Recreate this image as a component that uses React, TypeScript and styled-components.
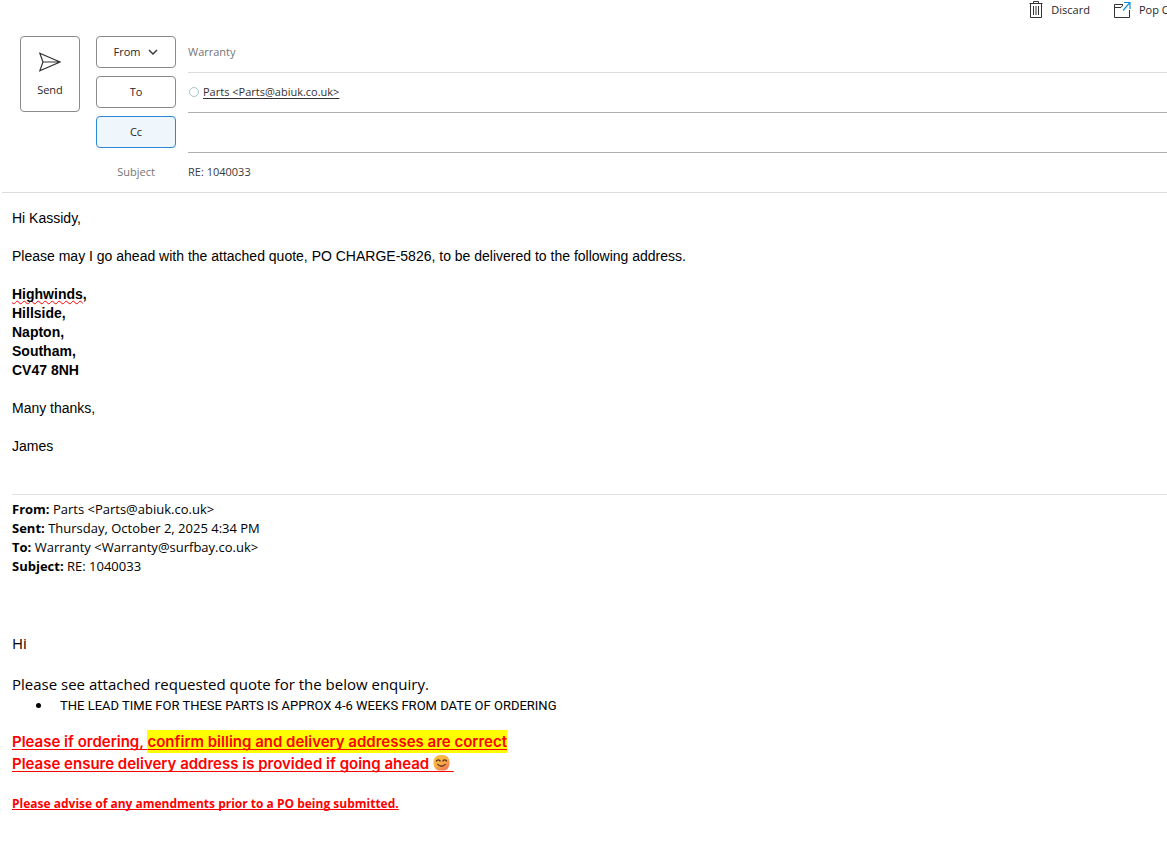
import React from "react";
import styled, { createGlobalStyle } from "styled-components";

const ui = `"Open Sans", "Segoe UI", sans-serif`;
const text = `"Liberation Sans", Arial, sans-serif`;
const humanist = `"Open Sans", Calibri, sans-serif`;

const GlobalStyle = createGlobalStyle`
  *, *::before, *::after { box-sizing: border-box; }
  body { margin: 0; background: #fff; color: #000; overflow-x: hidden; }
  p, ul { margin: 0; padding: 0; }
`;

const Page = styled.main`
  min-width: 0;
  overflow: hidden;
`;

const Toolbar = styled.div`
  display: flex;
  justify-content: flex-end;
  gap: 24px;
  height: 32px;
  margin-right: -14px;
`;

const ToolButton = styled.button`
  display: flex;
  align-items: center;
  gap: 8px;
  height: 20px;
  padding: 0;
  border: 0;
  background: none;
  color: #262626;
  font: 11px/20px ${ui};
  white-space: nowrap;
  svg { flex: none; }
`;

const Compose = styled.form`
  display: grid;
  grid-template-columns: 60px 1fr;
  gap: 16px;
  margin-left: 2px;
  padding-left: 18px;
  border-bottom: 1px solid #dcdcdc;
`;

const SendButton = styled.button`
  display: flex;
  flex-direction: column;
  align-items: center;
  justify-content: center;
  gap: 8px;
  height: 76px;
  margin-top: 4px;
  padding: 4px 0 0;
  border: 1px solid #8a8a8a;
  border-radius: 4px;
  background: #fff;
  color: #262626;
  font: 11px/20px ${ui};
`;

const Fields = styled.div`
  display: grid;
  grid-auto-rows: 40px;
  min-width: 0;
`;

const FieldRow = styled.div`
  display: grid;
  grid-template-columns: 80px 1fr;
  gap: 12px;
  align-items: center;
`;

const FieldButton = styled.button<{ $active?: boolean }>`
  display: flex;
  align-items: center;
  justify-content: center;
  gap: 8px;
  height: 32px;
  padding: 0;
  border: 1px solid ${(p) => (p.$active ? "#2b88d8" : "#8a8a8a")};
  border-radius: 4px;
  background: ${(p) => (p.$active ? "#eff6fc" : "#fff")};
  color: #262626;
  font: 11px/20px ${ui};
`;

const FieldLabel = styled.label`
  text-align: center;
  color: #757575;
  font: 11px/20px ${ui};
`;

const FieldValue = styled.div<{ $line?: string }>`
  display: flex;
  align-items: center;
  gap: 4px;
  height: 40px;
  min-width: 0;
  box-shadow: ${(p) => (p.$line ? `0 1px 0 ${p.$line}` : "none")};
`;

const FieldInput = styled.input<{ $muted?: boolean }>`
  flex: 1;
  min-width: 0;
  padding: 0;
  border: 0;
  outline: 0;
  background: transparent;
  color: ${(p) => (p.$muted ? "#757575" : "#3b3a39")};
  font: 11px/20px ${ui};
`;

const Presence = styled.span`
  width: 10px;
  height: 10px;
  margin-left: 1px;
  border: 1px solid #a9c4cd;
  border-radius: 50%;
`;

const Recipient = styled.a`
  color: #323130;
  font: 11px/20px ${ui};
  text-decoration: underline;
  text-underline-offset: 2px;
`;

const Message = styled.article`
  padding: 16px 0 32px 12px;
`;

const Paragraph = styled.p`
  margin-bottom: 19px;
  font: 14px/19px ${text};
`;

const Address = styled.p`
  margin-bottom: 19px;
  font: bold 14px/19px ${text};
`;

const Misspelled = styled.span`
  text-decoration: underline wavy #f00 1px;
  text-decoration-skip-ink: none;
  text-underline-offset: 1px;
`;

const QuoteHeader = styled.div`
  margin-top: 38px;
  padding-top: 5px;
  border-top: 1px solid #e1e1e1;
  font: 13px/19px ${humanist};
`;

const Quoted = styled.section`
  padding-top: 57px;
`;

const Large = styled.p`
  margin-bottom: 20px;
  font: 15px/21px ${humanist};
`;

const Notes = styled.ul`
  margin-top: -20px;
  padding-left: 24px;
  list-style: none;
  font: 13px/21px Roboto, sans-serif;
`;

const Note = styled.li`
  display: flex;
  align-items: center;
  gap: 19px;
  &::before {
    content: "";
    width: 5px;
    height: 5px;
    border-radius: 50%;
    background: #000;
  }
`;

const Warning = styled.div`
  margin-top: 15px;
  color: #f00;
  font: 600 15px/22px Inter, sans-serif;
  text-decoration: underline;
  text-decoration-skip-ink: none;
  text-underline-offset: 2px;
  mark { padding: 2px 0; background: #ff0; color: inherit; }
  svg { display: inline-block; vertical-align: -2px; box-shadow: 0 1px 0 #f00; }
`;

const SmallWarning = styled.p`
  margin-top: 18px;
  color: #f00;
  font: bold 12px/22px ${humanist};
  text-decoration: underline;
  text-decoration-skip-ink: none;
`;

const TrashIcon = () => (
  <svg width="14" height="18" viewBox="0 0 14 18" fill="none" stroke="#333" aria-hidden="true">
    <path d="M0.5 2.5h13M4.5 2V.5h5V2M1.5 2.5v14h11v-14M4.5 5v9M7 5v9M9.5 5v9" />
  </svg>
);

const PopOutIcon = () => (
  <svg width="17" height="18" viewBox="0 0 17 18" fill="none" aria-hidden="true">
    <path d="M9 3.5H.5v13h15V9M.5 6.5H7L9 4" stroke="#333" />
    <path d="M9 9.5L15.5 2M10 1.5h6V8" stroke="#1a8fdb" strokeWidth="1.2" />
  </svg>
);

const SendIcon = () => (
  <svg width="22" height="20" viewBox="0 0 22 20" fill="none" stroke="#333" strokeWidth="1.2" strokeLinejoin="miter" aria-hidden="true">
    <path d="M.8 1.2L21 10 .8 18.8 4 10zM4 10h16" />
  </svg>
);

const ChevronIcon = () => (
  <svg width="10" height="6" viewBox="0 0 10 6" fill="none" stroke="#333" strokeWidth="1.4" aria-hidden="true">
    <path d="M1 1l4 4 4-4" />
  </svg>
);

const SmileIcon = () => (
  <svg width="17" height="16" viewBox="0 0 17 16" role="img" aria-label="Smiling face">
    <defs>
      <linearGradient id="face" x1="0" y1="0" x2="0.6" y2="1">
        <stop offset="0" stopColor="#f9c23c" />
        <stop offset="0.6" stopColor="#fbae45" />
        <stop offset="1" stopColor="#f07a55" />
      </linearGradient>
    </defs>
    <rect x="0.5" width="16" height="15.6" rx="6.5" fill="url(#face)" />
    <path d="M3.5 6q1.8-2.2 3.6 0M9.9 6q1.8-2.2 3.6 0M4.8 9.4q3.7 3.6 7.4 0" fill="none" stroke="#5c3326" strokeWidth="1.3" strokeLinecap="round" />
  </svg>
);

export default function App() {
  return (
    <Page>
      <GlobalStyle />
      <Toolbar>
        <ToolButton><TrashIcon />Discard</ToolButton>
        <ToolButton><PopOutIcon />Pop Out</ToolButton>
      </Toolbar>
      <Compose onSubmit={(e) => e.preventDefault()}>
        <SendButton type="submit"><SendIcon />Send</SendButton>
        <Fields>
          <FieldRow>
            <FieldButton type="button">From <ChevronIcon /></FieldButton>
            <FieldValue $line="#dcdcdc">
              <FieldInput $muted aria-label="From" defaultValue="Warranty" />
            </FieldValue>
          </FieldRow>
          <FieldRow>
            <FieldButton type="button">To</FieldButton>
            <FieldValue $line="#b0adab">
              <Presence />
              <Recipient href="mailto:Parts@abiuk.co.uk">Parts &lt;Parts@abiuk.co.uk&gt;</Recipient>
            </FieldValue>
          </FieldRow>
          <FieldRow>
            <FieldButton type="button" $active>Cc</FieldButton>
            <FieldValue $line="#b0adab">
              <FieldInput aria-label="Cc" />
            </FieldValue>
          </FieldRow>
          <FieldRow>
            <FieldLabel htmlFor="subject">Subject</FieldLabel>
            <FieldValue>
              <FieldInput id="subject" defaultValue="RE: 1040033" />
            </FieldValue>
          </FieldRow>
        </Fields>
      </Compose>
      <Message>
        <Paragraph>Hi Kassidy,</Paragraph>
        <Paragraph>
          Please may I go ahead with the attached quote, PO CHARGE-5826, to be delivered to the following address.
        </Paragraph>
        <Address>
          <Misspelled>Highwinds</Misspelled>,<br />
          Hillside,<br />
          Napton,<br />
          Southam,<br />
          CV47 8NH
        </Address>
        <Paragraph>Many thanks,</Paragraph>
        <Paragraph>James</Paragraph>
        <QuoteHeader>
          <p><b>From:</b> Parts &lt;Parts@abiuk.co.uk&gt;</p>
          <p><b>Sent:</b> Thursday, October 2, 2025 4:34 PM</p>
          <p><b>To:</b> Warranty &lt;Warranty@surfbay.co.uk&gt;</p>
          <p><b>Subject:</b> RE: 1040033</p>
        </QuoteHeader>
        <Quoted>
          <Large>Hi</Large>
          <Large>Please see attached requested quote for the below enquiry.</Large>
          <Notes>
            <Note>THE LEAD TIME FOR THESE PARTS IS APPROX 4-6 WEEKS FROM DATE OF ORDERING</Note>
          </Notes>
          <Warning>
            <p>Please if ordering, <mark>confirm billing and delivery addresses are correct</mark></p>
            <p>Please ensure delivery address is provided if going ahead <SmileIcon />&nbsp;</p>
          </Warning>
          <SmallWarning>Please advise of any amendments prior to a PO being submitted.</SmallWarning>
        </Quoted>
      </Message>
    </Page>
  );
}
